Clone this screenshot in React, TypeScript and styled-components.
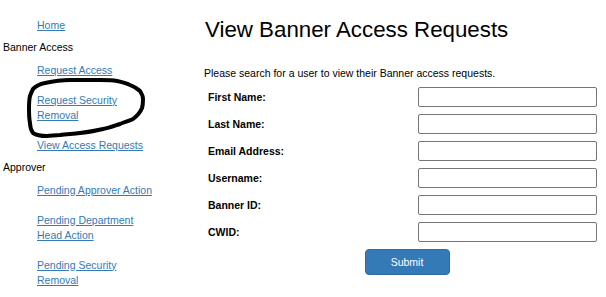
import React from "react";
import styled, { createGlobalStyle } from "styled-components";

const Global = createGlobalStyle`
  html, body { margin: 0; padding: 0; background: #fff; }
  body { font-family: "Liberation Sans", Arial, sans-serif; color: #000; }
`;

const Page = styled.div`
  position: relative;
  display: flex;
  width: 606px;
  height: 297px;
  overflow: hidden;
`;

const Sidebar = styled.nav`
  width: 204px;
  flex: none;
  padding-top: 10px;
  box-sizing: border-box;
  font-size: 10.5px;
`;

const Section = styled.div`
  line-height: 15px;
  padding-left: 3px;
`;

const NavItem = styled.div`
  padding: 7.5px 0 7.5px 37px;
  line-height: 15px;
  white-space: nowrap;
`;

const NavLink = styled.a`
  color: #337ab7;
  text-decoration: underline;
  cursor: pointer;
`;

const Scribble = styled.svg`
  position: absolute;
  left: 24px;
  top: 76px;
  width: 125px;
  height: 64px;
  pointer-events: none;
`;

const Content = styled.main`
  flex: 1;
  min-width: 0;
`;

const Title = styled.h1`
  margin: 17px 0 0 1px;
  font-size: 22.3px;
  font-weight: normal;
  line-height: 25px;
`;

const Intro = styled.p`
  margin: 24px 0 0 0;
  font-size: 10.5px;
  line-height: 15px;
`;

const Form = styled.form`
  display: grid;
  grid-template-columns: 210px 179px;
  row-gap: 7px;
  padding-left: 4px;
  margin-top: 6px;
  align-items: center;
`;

const Label = styled.label`
  font-size: 10.5px;
  font-weight: bold;
`;

const Input = styled.input`
  box-sizing: border-box;
  width: 179px;
  height: 20px;
  border: 1px solid #767676;
  border-radius: 2px;
  padding: 0 3px;
  margin: 0;
  font-family: inherit;
  font-size: 11px;
`;

const Actions = styled.div`
  grid-column: 1 / -1;
  display: flex;
  justify-content: center;
  padding-left: 9px;
`;

const Button = styled.button`
  width: 85px;
  height: 26px;
  background: #337ab7;
  border: 1px solid #2e6da4;
  border-radius: 4px;
  color: #fff;
  font-family: inherit;
  font-size: 10.5px;
  cursor: pointer;
`;

type NavEntry = { kind: "section" | "link"; lines: string[] };

const nav: NavEntry[] = [
  { kind: "link", lines: ["Home"] },
  { kind: "section", lines: ["Banner Access"] },
  { kind: "link", lines: ["Request Access"] },
  { kind: "link", lines: ["Request Security", "Removal"] },
  { kind: "link", lines: ["View Access Requests"] },
  { kind: "section", lines: ["Approver"] },
  { kind: "link", lines: ["Pending Approver Action"] },
  { kind: "link", lines: ["Pending Department", "Head Action"] },
  { kind: "link", lines: ["Pending Security", "Removal"] },
];

const fields = ["First Name:", "Last Name:", "Email Address:", "Username:", "Banner ID:", "CWID:"];

export default function App() {
  return (
    <>
      <Global />
      <Page>
        <Sidebar>
          {nav.map((n, i) =>
            n.kind === "section" ? (
              <Section key={i}>{n.lines[0]}</Section>
            ) : (
              <NavItem key={i}>
                {n.lines.map((l, j) => (
                  <React.Fragment key={j}>
                    {j > 0 && <br />}
                    <NavLink>{l}</NavLink>
                  </React.Fragment>
                ))}
              </NavItem>
            )
          )}
        </Sidebar>
        <Content>
          <Title>View Banner Access Requests</Title>
          <Intro>Please search for a user to view their Banner access requests.</Intro>
          <Form onSubmit={(e) => e.preventDefault()}>
            {fields.map((f) => (
              <React.Fragment key={f}>
                <Label>{f}</Label>
                <Input type="text" />
              </React.Fragment>
            ))}
            <Actions>
              <Button type="submit">Submit</Button>
            </Actions>
          </Form>
        </Content>
        <Scribble viewBox="0 0 125 64">
          <path
            d="M9 13 C13 9 16 8 21 7 C30 5 38 4 46 4 C56 4 66 4 76 4 C83 4 88 4 93 5 C98 6 102 7 106 9 C111 11 114 13 116 15 C118 18 119 20 119 23 C119 27 119 29 118 32 C116 37 113 40 109 43 C105 45 101 46 96 48 C90 50 85 52 79 53 C71 55 64 56 56 57 C49 58 43 58 36 59 C31 59 27 60 23 60 C17 60 12 59 9 57 C7 54 6 51 6 47 C5 42 5 38 5 33 C5 28 5 24 6 20 C7 17 8 15 9 13"
            fill="none"
            stroke="#000"
            strokeWidth={4}
            strokeLinecap="round"
            strokeLinejoin="round"
          />
        </Scribble>
      </Page>
    </>
  );
}
